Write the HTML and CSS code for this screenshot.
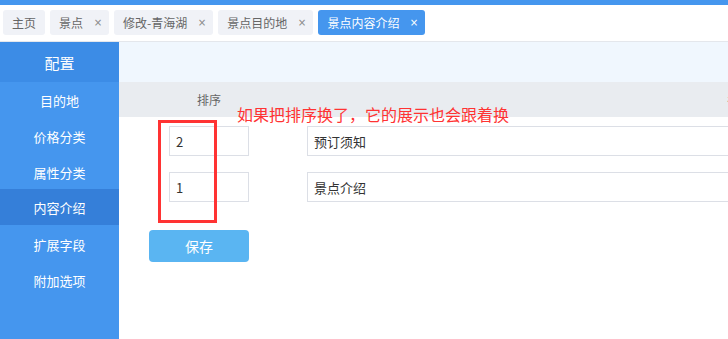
FILE: index.html
```html
<!DOCTYPE html>
<html lang="zh">
<head>
<meta charset="utf-8">
<link rel="stylesheet" href="styles.css">
</head>
<body>
<div class="topbar"></div>
<div class="tabs">
  <div class="tab">主页</div>
  <div class="tab">景点<span class="x">×</span></div>
  <div class="tab">修改-青海湖<span class="x">×</span></div>
  <div class="tab">景点目的地<span class="x">×</span></div>
  <div class="tab active">景点内容介绍<span class="x">×</span></div>
</div>
<div class="layout">
  <aside class="side">
    <div class="side-head">配置</div>
    <div class="item">目的地</div>
    <div class="item">价格分类</div>
    <div class="item">属性分类</div>
    <div class="item on">内容介绍</div>
    <div class="item">扩展字段</div>
    <div class="item">附加选项</div>
  </aside>
  <main class="main">
    <div class="band"></div>
    <div class="thead">
      <div class="th th1">排序</div>
      <div class="th th2">名称</div>
    </div>
    <div class="rows">
      <div class="row">
        <div class="inp small">2</div>
        <div class="inp wide">预订须知</div>
      </div>
      <div class="row">
        <div class="inp small">1</div>
        <div class="inp wide">景点介绍</div>
      </div>
    </div>
    <div class="save">保存</div>
    <div class="redbox"></div>
    <div class="note">如果把排序换了，它的展示也会跟着换</div>
  </main>
</div>
</body>
</html>
```
FILE: styles.css
```css
* { box-sizing: border-box; }
html, body { margin: 0; padding: 0; }
body {
  width: 728px;
  height: 339px;
  overflow: hidden;
  font-family: "Noto Sans CJK SC", "Noto Sans", sans-serif;
  background: #fff;
}
.topbar { height: 5px; background: #4596ee; }
.tabs {
  height: 37px;
  display: flex;
  gap: 5px;
  padding: 5px 0 0 3px;
  border-bottom: 1px solid #e4e7ec;
}
.tab {
  height: 25px;
  display: flex;
  align-items: center;
  padding: 0 9px;
  background: #f0f2f7;
  color: #666;
  font-size: 12px;
  border-radius: 3px;
  white-space: nowrap;
}
.tab .x {
  margin-left: 10px;
  font-size: 12px;
  color: #888;
  margin-right: -3px;
  font-family: "DejaVu Sans", sans-serif;
  transform: scale(0.85);
}
.tab.active { background: #4596ee; color: #fff; }
.tab.active .x { color: #fff; }
.layout { display: flex; height: 297px; }
.side {
  width: 119px;
  flex: none;
  background: #4596ee;
  color: #fff;
}
.side-head {
  height: 40px;
  display: flex;
  align-items: center;
  justify-content: center;
  background: #3c8ce6;
  font-size: 15px;
}
.item {
  height: 36px;
  display: flex;
  align-items: center;
  justify-content: center;
  font-size: 13px;
}
.item.on { background: #357fd9; margin-top: -1px; margin-bottom: 1px; }
.main {
  flex: 1;
  position: relative;
  overflow: hidden;
}
.band { height: 40px; background: #f0f7fe; }
.thead {
  height: 35px;
  display: flex;
  align-items: center;
  background: #e9ecf0;
  width: 1060px;
}
.th { font-size: 12px; color: #666; text-align: center; }
.th1 { width: 180px; }
.th2 { width: 880px; }
.rows {
  display: flex;
  flex-direction: column;
  gap: 16px;
  padding-top: 9px;
}
.row { display: flex; height: 30px; padding-left: 50px; }
.inp {
  height: 30px;
  border: 1px solid #dcdfe6;
  display: flex;
  align-items: center;
  padding-left: 6px;
  font-size: 13px;
  color: #333;
  flex: none;
}
.small { width: 80px; }
.wide { width: 600px; margin-left: 58px; }
.save {
  margin: 28px 0 0 30px;
  width: 100px;
  height: 32px;
  border-radius: 4px;
  background: #5ab5f2;
  color: #fff;
  font-size: 14px;
  display: flex;
  align-items: center;
  justify-content: center;
}
.redbox {
  position: absolute;
  left: 39px;
  top: 78px;
  width: 59px;
  height: 103px;
  border: 3px solid #ff3333;
}
.note {
  position: absolute;
  left: 118px;
  top: 62px;
  font-size: 16px;
  line-height: 20px;
  color: #ff3333;
  white-space: nowrap;
}
```
